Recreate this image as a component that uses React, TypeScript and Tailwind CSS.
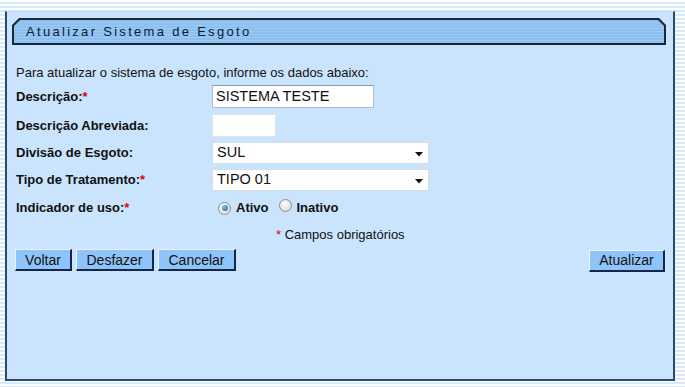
import React from "react";

const Arrow = () => (
  <svg width="8" height="5" viewBox="0 0 8 5" className="absolute right-[5px] top-[9px]">
    <path d="M0 0 H8 L4 4.5 Z" fill="#111" />
  </svg>
);

const Radio = ({ checked }: { checked?: boolean }) => (
  <span className="relative inline-flex h-[13px] w-[13px] items-center justify-center rounded-full border border-[#8e8f8f] bg-[radial-gradient(circle_at_40%_35%,#ffffff,#d0d0d0)]">
    {checked && (
      <span className="h-[6px] w-[6px] rounded-full bg-[radial-gradient(circle_at_35%_35%,#7cc0f5,#1a5d9c)]" />
    )}
  </span>
);

const Btn = ({ children, w }: { children: React.ReactNode; w: string }) => (
  <button
    className={`h-[22px] ${w} border-l border-t border-[#eaf4ff] border-r-2 border-b-2 border-r-[#16264a] border-b-[#16264a] bg-[#8fc4fa] text-[14px] leading-[18px] text-[#111]`}
  >
    {children}
  </button>
);

const chamfer =
  "[clip-path:polygon(7px_0,calc(100%-7px)_0,100%_7px,100%_100%,0_100%,0_7px)]";

export default function App() {
  return (
    <div
      className="h-[387px] w-[685px] overflow-hidden pl-[5px] pt-[11px] bg-[repeating-linear-gradient(180deg,#ffffff_0px,#ffffff_2px,#d6eafa_2px,#d6eafa_4px)]"
      style={{ fontFamily: '"Liberation Sans", Arial, sans-serif' }}
    >
      <div className="h-[370px] w-[670px] border-t border-t-[#b8d6f2] border-l-2 border-r-2 border-b-2 border-l-[#2d4a6a] border-r-[#2d4a6a] border-b-[#2d4a6a] bg-[#cae4fd]">
        <div className={`ml-[5px] mt-[6px] h-[27px] w-[654px] bg-[#1b2636] p-[2px] ${chamfer}`}>
          <div
            className={`flex h-full w-full items-center bg-[repeating-linear-gradient(180deg,#8dbff0_0px,#8dbff0_2px,#9ac9f4_2px,#9ac9f4_3px)] pl-[12px] text-[13px] tracking-[2.3px] text-[#0e1830] [clip-path:polygon(6px_0,calc(100%-6px)_0,100%_6px,100%_100%,0_100%,0_6px)]`}
          >
            Atualizar Sistema de Esgoto
          </div>
        </div>

        <div className="pl-[9px] pr-[8px] text-[#111]">
          <div className="mt-[21px] h-[14px] text-[13px] leading-[14px]">
            Para atualizar o sistema de esgoto, informe os dados abaixo:
          </div>

          <div className="mt-[5px] flex h-[23px] items-center">
            <div className="w-[196px] text-[13px] font-bold">
              Descrição:<span className="text-[#e00000]">*</span>
            </div>
            <div className="flex h-[23px] w-[162px] items-center border border-[#a9bcd0] border-t-[#7f9ab4] bg-white pl-[3px] text-[14.5px]">
              SISTEMA TESTE
            </div>
          </div>

          <div className="mt-[6px] flex h-[23px] items-center">
            <div className="w-[196px] text-[13px] font-bold">Descrição Abreviada:</div>
            <div className="h-[23px] w-[64px] border border-[#dde6ef] bg-white" />
          </div>

          <div className="mt-[5px] flex h-[22px] items-center">
            <div className="w-[196px] text-[13px] font-bold">Divisão de Esgoto:</div>
            <div className="relative flex h-[22px] w-[217px] items-center border border-[#d5dde6] bg-white pl-[4px] text-[14.5px]">
              SUL
              <Arrow />
            </div>
          </div>

          <div className="mt-[5px] flex h-[22px] items-center">
            <div className="w-[196px] text-[13px] font-bold">
              Tipo de Tratamento:<span className="text-[#e00000]">*</span>
            </div>
            <div className="relative flex h-[22px] w-[217px] items-center border border-[#d5dde6] bg-white pl-[4px] text-[14.5px]">
              TIPO 01
              <Arrow />
            </div>
          </div>

          <div className="mt-[8px] flex h-[18px] items-center">
            <div className="w-[196px] text-[13px] font-bold">
              Indicador de uso:<span className="text-[#e00000]">*</span>
            </div>
            <div className="flex items-center pl-[6px] text-[13px] font-bold">
              <Radio checked />
              <span className="ml-[5px]">Ativo</span>
              <span className="ml-[10px]">
                <Radio />
              </span>
              <span className="ml-[5px]">Inativo</span>
            </div>
          </div>

          <div className="mt-[11px] h-[14px] pl-[260px] text-[13px] leading-[14px]">
            <span className="text-[#e00000]">*</span> Campos obrigatórios
          </div>

          <div className="-ml-[1px] mt-[7px] flex h-[22px] items-center">
            <div className="flex gap-[4px]">
              <Btn w="w-[57px]">Voltar</Btn>
              <Btn w="w-[78px]">Desfazer</Btn>
              <Btn w="w-[78px]">Cancelar</Btn>
            </div>
            <div className="ml-auto">
              <Btn w="w-[76px]">Atualizar</Btn>
            </div>
          </div>
        </div>
      </div>
    </div>
  );
}
